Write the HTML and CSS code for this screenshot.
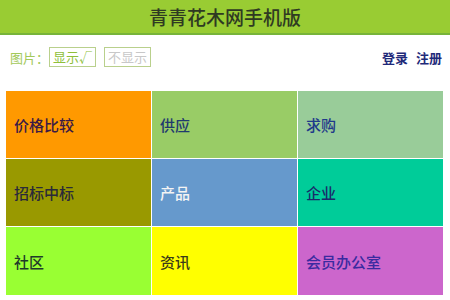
FILE: index.html
```html
<!DOCTYPE html>
<html lang="zh">
<head>
<meta charset="utf-8">
<link rel="stylesheet" href="styles.css">
</head>
<body>
<header class="top">青青花木网手机版</header>
<div class="bar">
  <div class="pic">
    <span class="label">图片：</span>
    <span class="btn on">显示√</span>
    <span class="btn off">不显示</span>
  </div>
  <div class="user"><a>登录</a><a>注册</a></div>
</div>
<nav class="grid">
  <a class="cell c1">价格比较</a>
  <a class="cell c2">供应</a>
  <a class="cell c3">求购</a>
  <a class="cell c4">招标中标</a>
  <a class="cell c5">产品</a>
  <a class="cell c6">企业</a>
  <a class="cell c7">社区</a>
  <a class="cell c8">资讯</a>
  <a class="cell c9">会员办公室</a>
</nav>
</body>
</html>
```
FILE: styles.css
```css
html, body { margin: 0; padding: 0; background: #fff; }
body { font-family: "Noto Sans CJK SC", "Noto Sans", sans-serif; width: 450px; }
.top {
  height: 33px;
  background: #99cc33;
  border-bottom: 2px solid #77b43a;
  color: #2f3a22;
  font-size: 19px;
  font-weight: 500;
  line-height: 33px;
  text-align: center;
}
.bar {
  display: flex;
  justify-content: space-between;
  align-items: center;
  height: 44px;
  padding: 0 8px 0 10px;
}
.pic { display: flex; align-items: center; }
.label { color: #a3c95a; font-size: 13px; }
.btn {
  font-size: 13px;
  line-height: 18px;
  padding: 0 3px;
  border: 1px solid #b9d08c;
  margin-right: 8px;
}
.btn.on { color: #8fbf3a; }
.btn.off { color: #c8c8c8; }
.user { display: flex; gap: 8px; }
.user a { color: #1f2a7a; font-size: 13px; font-weight: 700; }
.grid {
  display: grid;
  grid-template-columns: 145px 145px 145px;
  grid-template-rows: 67px 67px 68px;
  gap: 1px;
  margin: 12px 0 0 6px;
  width: 437px;
}
.cell {
  display: flex;
  align-items: center;
  padding-left: 8px;
  font-size: 15px;
  font-weight: 500;
  color: #2a2a5a;
}
.c1 { background: #ff9900; color: #3a1a46; }
.c2 { background: #99cc66; color: #1f3a6e; }
.c3 { background: #99cc99; color: #1f3a8a; }
.c4 { background: #999900; color: #2a2a3a; }
.c5 { background: #6699cc; color: #f4f4f4; }
.c6 { background: #00cc99; color: #1a2a6a; }
.c7 { background: #99ff33; color: #1f3a2a; }
.c8 { background: #ffff00; color: #3a3a1a; }
.c9 { background: #cc66cc; color: #3a2aa0; }
```
